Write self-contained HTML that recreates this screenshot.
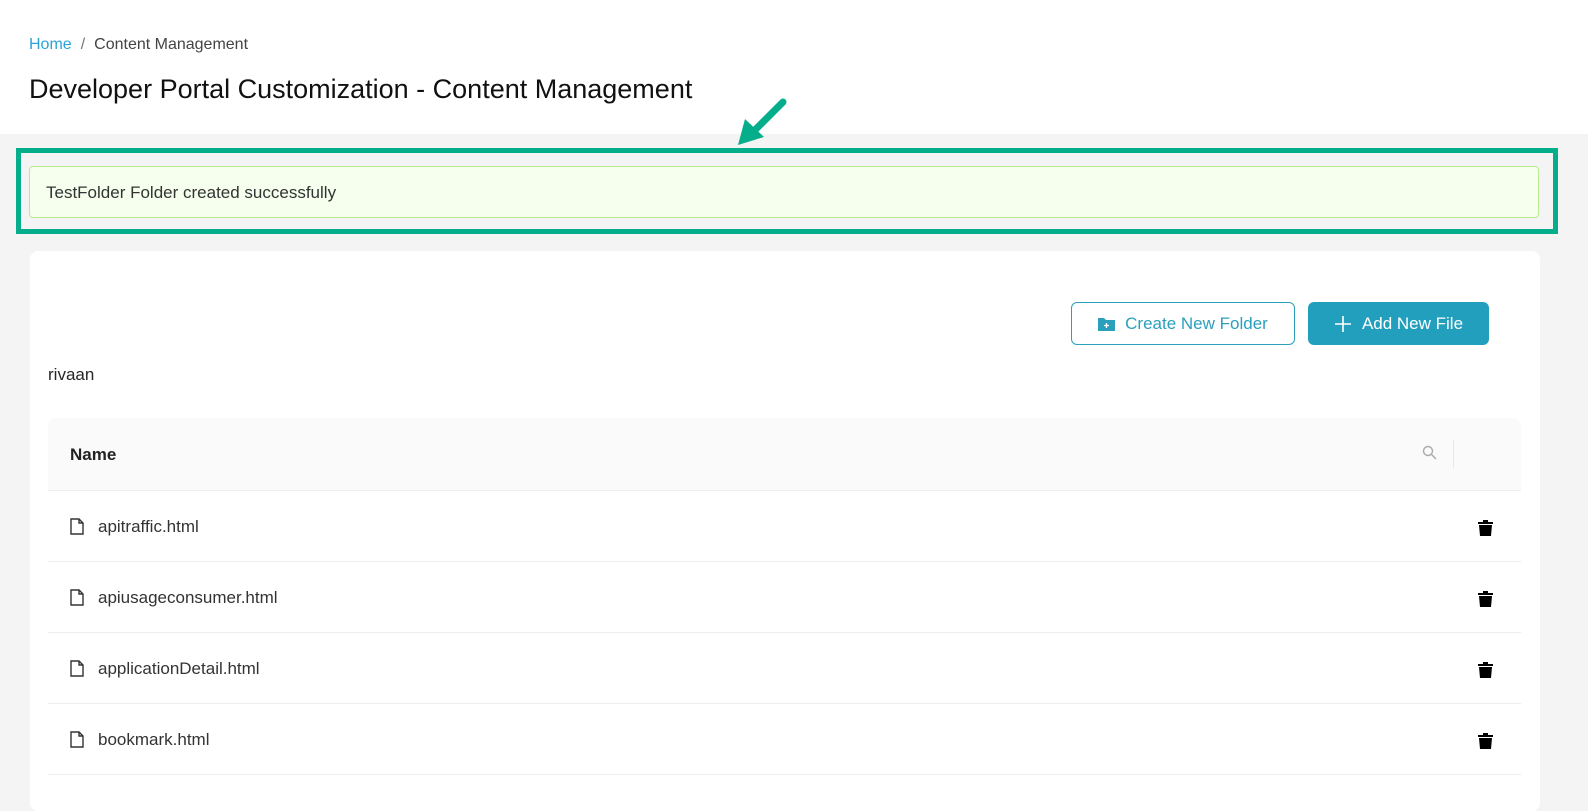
<!DOCTYPE html>
<html><head><meta charset="utf-8"><style>
*{box-sizing:border-box;margin:0;padding:0}
body{width:1588px;height:788px;overflow:hidden;background:#f4f4f4;font-family:"Liberation Sans",sans-serif;color:#262626;position:relative}
.top{position:absolute;left:0;top:0;width:1588px;height:134px;background:#fff}
.bc{position:absolute;left:29px;top:36px;font-size:16px;color:#444}
.bc a{color:#2aa3dc;text-decoration:none}
.bc span.s{margin:0 9px;color:#777}
h1{position:absolute;left:29px;top:74px;font-size:27px;font-weight:normal;color:#111}
.hl{position:absolute;left:16px;top:148px;width:1542px;height:86px;border:5px solid #05ae8a}
.alert{position:absolute;left:29px;top:166px;width:1510px;height:52px;background:#f6ffed;border:1px solid #b7eb8f;border-radius:4px;font-size:17px;padding:16px 16px;color:#333}
.card{position:absolute;left:30px;top:251px;width:1510px;height:560px;background:#fff;border-radius:8px}
.b1{position:absolute;left:1071px;top:302px;width:224px;height:43px;border:1px solid #2ba0bd;border-radius:6px;color:#2ba0bd;font-size:17px;display:flex;align-items:center;justify-content:center;gap:10px;background:#fff}
.b2{position:absolute;left:1308px;top:302px;width:181px;height:43px;background:#229fbd;border-radius:6px;color:#fff;font-size:17px;display:flex;align-items:center;justify-content:center;gap:10px}
.rv{position:absolute;left:48px;top:365px;font-size:17px}
.th{position:absolute;left:48px;top:418px;width:1473px;height:73px;background:#fafafa;border-radius:8px 8px 0 0;border-bottom:1px solid #eee}
.th b{position:absolute;left:22px;top:27px;font-size:17px;font-weight:bold;color:#222}
.row{position:absolute;left:48px;width:1473px;height:71px;border-bottom:1px solid #eee;font-size:17px}
.row .n{position:absolute;left:50px;top:26px;color:#333}
.row svg.f{position:absolute;left:22px;top:27px}
.row svg.t{position:absolute;left:1430px;top:28px}
</style></head><body>
<div class="top"></div>
<div class="bc"><a>Home</a><span class="s">/</span>Content Management</div>
<h1>Developer Portal Customization - Content Management</h1>
<svg style="position:absolute;left:735px;top:96px" width="56" height="52"><path d="M48 6 L16 38" stroke="#05ae8a" stroke-width="7" stroke-linecap="round"/><path d="M3 49 L10 23 L29 41 Z" fill="#05ae8a"/></svg>
<div class="hl"></div>
<div class="alert">TestFolder Folder created successfully</div>
<div class="card"></div>
<div class="b1"><svg width="17" height="14" viewBox="0 0 17 14"><path d="M0 1h6l2 2h9v11H0z" fill="#2ba0bd"/><path d="M8.5 6v5M6 8.5h5" stroke="#fff" stroke-width="1.3"/></svg>Create New Folder</div>
<div class="b2"><svg width="18" height="18"><path d="M9 1v16M1 9h16" stroke="#fff" stroke-width="1.6"/></svg>Add New File</div>
<div class="rv">rivaan</div>
<div class="th"><b>Name</b>
<svg style="position:absolute;left:1374px;top:27px" width="16" height="16"><circle cx="6" cy="6" r="4.5" fill="none" stroke="#aaa" stroke-width="1.4"/><path d="M9.5 9.5l4.5 4.5" stroke="#aaa" stroke-width="1.5"/></svg>
<div style="position:absolute;left:1405px;top:22px;width:1px;height:28px;background:#e8e8e8"></div></div>
<div class="row" style="top:491px"><svg class="f" width="14" height="17"><path d="M1 1h8l4 4v11H1z M9 1v4h4" fill="none" stroke="#333" stroke-width="1.4"/></svg><span class="n">apitraffic.html</span><svg class="t" width="15" height="17"><path d="M5 1h5v2h5v2H0V3h5z M1 6h13l-1 11H2z" fill="#000"/></svg></div>
<div class="row" style="top:562px"><svg class="f" width="14" height="17"><path d="M1 1h8l4 4v11H1z M9 1v4h4" fill="none" stroke="#333" stroke-width="1.4"/></svg><span class="n">apiusageconsumer.html</span><svg class="t" width="15" height="17"><path d="M5 1h5v2h5v2H0V3h5z M1 6h13l-1 11H2z" fill="#000"/></svg></div>
<div class="row" style="top:633px"><svg class="f" width="14" height="17"><path d="M1 1h8l4 4v11H1z M9 1v4h4" fill="none" stroke="#333" stroke-width="1.4"/></svg><span class="n">applicationDetail.html</span><svg class="t" width="15" height="17"><path d="M5 1h5v2h5v2H0V3h5z M1 6h13l-1 11H2z" fill="#000"/></svg></div>
<div class="row" style="top:704px"><svg class="f" width="14" height="17"><path d="M1 1h8l4 4v11H1z M9 1v4h4" fill="none" stroke="#333" stroke-width="1.4"/></svg><span class="n">bookmark.html</span><svg class="t" width="15" height="17"><path d="M5 1h5v2h5v2H0V3h5z M1 6h13l-1 11H2z" fill="#000"/></svg></div>
</body></html>
